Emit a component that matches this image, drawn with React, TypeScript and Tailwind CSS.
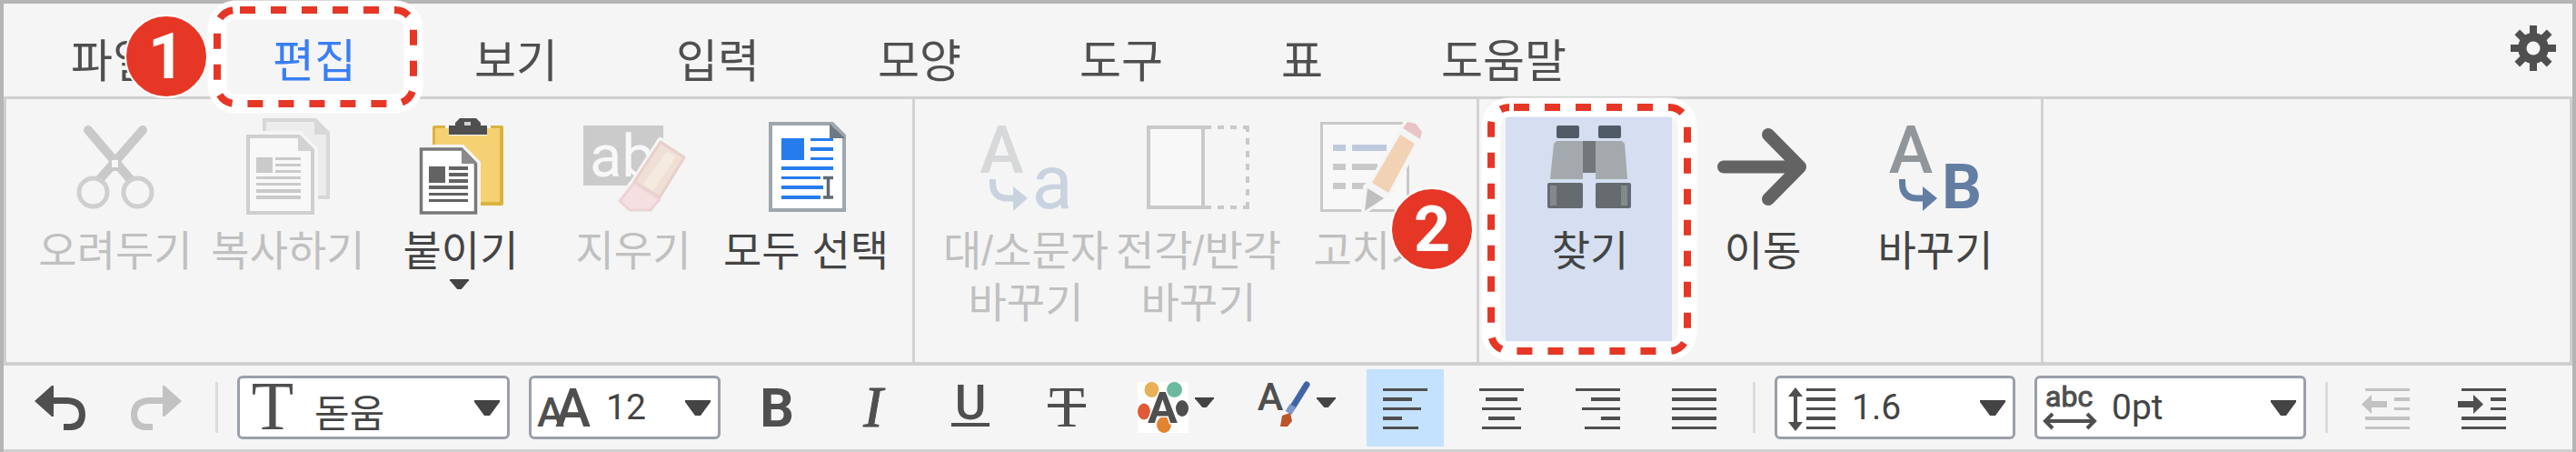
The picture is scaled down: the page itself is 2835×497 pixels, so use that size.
import { useState } from "react";
import type { ReactNode } from "react";

const TABS = ["파일", "편집", "보기", "입력", "모양", "도구", "표", "도움말"];

/* ---------- callouts ---------- */

function Ring({ width, height, className }: { width: number; height: number; className: string }) {
  const shape = { x: 10, y: 11, width: width - 20, height: height - 21, rx: 20, fill: "none" };
  return (
    <svg
      width={width}
      height={height}
      className={`pointer-events-none absolute z-10 max-w-none overflow-visible ${className}`}
      aria-hidden="true"
    >
      <rect {...shape} stroke="#ffffff" strokeWidth="21" />
      <rect {...shape} stroke="#e63726" strokeWidth="8" strokeDasharray="17 17" strokeDashoffset="-5" />
    </svg>
  );
}

function Badge({ children, className }: { children: ReactNode; className: string }) {
  return (
    <span
      className={`pointer-events-none absolute z-20 flex size-[92px] items-center justify-center rounded-full border-2 border-white bg-[#e63726] font-['Roboto',sans-serif] text-[70px] leading-none font-bold text-white ${className}`}
    >
      {children}
    </span>
  );
}

/* ---------- ribbon icons (111 x 112) ---------- */

function RibbonSvg({ children }: { children: ReactNode }) {
  return (
    <svg width="111" height="112" viewBox="0 0 111 112" className="overflow-visible" aria-hidden="true">
      {children}
    </svg>
  );
}

const roboto = "Roboto, sans-serif";

function CutIcon() {
  return (
    <RibbonSvg>
      <g fill="none" stroke="#c9c9c9">
        <path d="M27 15 L74 70 M87 15 L39 70" strokeWidth="10" strokeLinecap="round" />
        <circle cx="32.5" cy="83.5" r="15.5" stroke="#cfcfcf" strokeWidth="5" fill="#f5f5f5" />
        <circle cx="81.5" cy="83.5" r="15.5" stroke="#cfcfcf" strokeWidth="5" fill="#f5f5f5" />
      </g>
      <rect x="50" y="43" width="14" height="17" fill="#c9c9c9" />
      <rect x="53" y="48" width="7" height="8" fill="#f8f8f8" />
    </RibbonSvg>
  );
}

function CopyIcon() {
  return (
    <RibbonSvg>
      <path d="M31 4 H87 L101 18 V89 H31 Z" fill="#ececec" stroke="#d7d7d7" strokeWidth="4" />
      <path d="M86 2 V20 H103 Z" fill="#d7d7d7" />
      <path d="M7 16 H71 L90 35 V112 H7 Z" fill="#f5f5f5" />
      <path d="M13 22 H69 L84 37 V106 H13 Z" fill="#f8f8f8" stroke="#cfcfcf" strokeWidth="4" />
      <path d="M68 20 V38 H86 Z" fill="#d3d3d3" />
      <g fill="#cacaca">
        <rect x="22" y="45" width="18" height="17" />
        <rect x="43" y="45" width="28" height="3" />
        <rect x="43" y="52" width="28" height="3" />
        <rect x="43" y="59" width="28" height="3" />
        <rect x="22" y="66" width="49" height="3" />
        <rect x="22" y="73" width="49" height="3" />
        <rect x="22" y="80" width="49" height="4" />
        <rect x="22" y="87" width="49" height="4" />
      </g>
    </RibbonSvg>
  );
}

function PasteIcon() {
  return (
    <RibbonSvg>
      <rect x="26" y="10" width="78" height="88" rx="2" fill="#dbb33d" />
      <rect x="29" y="13" width="71" height="81" fill="#f5d173" />
      <path d="M40 10 H90 V13 H86 V21 H44 V13 H40 Z" fill="#f5f5f5" />
      <rect x="44" y="10" width="42" height="10" fill="#4f4f4f" />
      <path d="M51 11 V7 L56 2 H74 L79 7 V11 Z" fill="#4f4f4f" />
      <rect x="61" y="6" width="7" height="4" fill="#d0d0d0" />
      <path d="M8 31 H60 L79 50 V112 H8 Z" fill="#f5f5f5" />
      <path d="M13.5 36 H58 L73.5 52 V106 H13.5 Z" fill="#ffffff" stroke="#787878" strokeWidth="3.5" />
      <path d="M58 34 V52 H75 Z" fill="#8b8b8b" />
      <g fill="#636363">
        <rect x="22" y="55" width="18" height="18" />
        <rect x="44" y="55" width="21" height="4" />
        <rect x="44" y="62" width="21" height="4" />
        <rect x="44" y="69" width="21" height="4" />
        <rect x="22" y="76" width="43" height="4" />
        <rect x="22" y="84" width="43" height="3" />
        <rect x="22" y="91" width="43" height="3" />
      </g>
    </RibbonSvg>
  );
}

function EraseIcon() {
  return (
    <RibbonSvg>
      <rect x="2" y="10" width="88" height="66" fill="#cbcbcb" />
      <text x="9" y="66" fontFamily={roboto} fontSize="65" fill="#f8f8f8">
        ab
      </text>
      <path
        d="M87 27 L113 44 L114 50 L87 90 L76 104 H52 L41 93 L58 72 Z"
        fill="#f5f5f5"
        stroke="#f5f5f5"
        strokeWidth="8"
        strokeLinejoin="round"
      />
      <path d="M87 28 L113 45 L86 89 L58 72 Z" fill="#f0dfd5" stroke="#e7cfca" strokeWidth="3" strokeLinejoin="round" />
      <path d="M94 38 L104 44 L79 82 L67 75 Z" fill="#f4eadd" />
      <path d="M58 73 L86 91 L76 103 H53 L42 93 Z" fill="#f5dfe1" stroke="#edd3d5" strokeWidth="3" strokeLinejoin="round" />
    </RibbonSvg>
  );
}

function SelectAllIcon() {
  return (
    <RibbonSvg>
      <path d="M18 8 H86 L99 21 V103 H18 Z" fill="#ffffff" stroke="#9ea7af" strokeWidth="4" />
      <path d="M83 8 V24 H100 Z" fill="#6f7983" />
      <g fill="#267ced">
        <rect x="30" y="24" width="25" height="24" />
        <rect x="62" y="24" width="25" height="3" />
        <rect x="62" y="34" width="25" height="4" />
        <rect x="62" y="45" width="25" height="3" />
        <rect x="30" y="55" width="57" height="4" />
        <rect x="30" y="66" width="43" height="3" />
        <rect x="30" y="76" width="46" height="4" />
        <rect x="30" y="87" width="43" height="4" />
      </g>
      <path d="M76 67.5 H87 M76 89 H87 M81.5 67 V89" stroke="#5f6973" strokeWidth="3.5" fill="none" />
    </RibbonSvg>
  );
}

function SwapArrow({ color }: { color: string }) {
  return (
    <>
      <path d="M20.5 69 V73 Q20.5 90 37 90 H44" fill="none" stroke={color} strokeWidth="7" />
      <path d="M43 77 L59 90 L43 104 Z" fill={color} />
    </>
  );
}

function CaseIcon() {
  return (
    <RibbonSvg>
      <text x="30.5" y="62" textAnchor="middle" fontFamily={roboto} fontSize="73" fontWeight="500" fill="#d6d8d9">
        A
      </text>
      <SwapArrow color="#c9d3df" />
      <text x="86" y="101" textAnchor="middle" fontFamily={roboto} fontSize="83" fill="#c9d3df">
        a
      </text>
    </RibbonSvg>
  );
}

function WidthIcon() {
  return (
    <RibbonSvg>
      <rect x="2" y="12" width="60" height="88" fill="#f8f8f8" stroke="#c9c9c9" strokeWidth="4" />
      <g fill="none" stroke="#c9c9c9" strokeWidth="4">
        <path d="M64 12 H113" strokeDasharray="7 7" />
        <path d="M64 100 H113" strokeDasharray="7 7" />
        <path d="M111 10 V102" strokeDasharray="7 7" />
      </g>
    </RibbonSvg>
  );
}

function FixIcon() {
  return (
    <RibbonSvg>
      <rect x="2.5" y="7.5" width="95" height="96" fill="#f8f8f8" stroke="#c9c9c9" strokeWidth="3" />
      <rect x="15" y="31" width="14" height="7" fill="#bfc9de" />
      <rect x="36" y="31" width="38" height="7" fill="#bfc9de" />
      <g fill="#c9c9c9">
        <rect x="15" y="52" width="14" height="7" />
        <rect x="36" y="52" width="28" height="7" />
        <rect x="15" y="73" width="14" height="7" />
        <rect x="36" y="73" width="16" height="7" />
      </g>
      <path
        d="M97 6 L106 8 L113 17 L111 24 L76 84 L50 103 L52 78 L58 73 L89 20 Z"
        fill="#f5f5f5"
        stroke="#f5f5f5"
        strokeWidth="8"
        strokeLinejoin="round"
      />
      <path d="M92 13 L97 6 L106 8 L113 17 L111 25 Z" fill="#e9c3c5" />
      <path d="M89 20 L105 30 L76 84 L58 73 Z" fill="#f1d2b4" />
      <path d="M53 79 L71 90 L50 104 Z" fill="#bfbfbf" />
    </RibbonSvg>
  );
}

function FindIcon() {
  return (
    <RibbonSvg>
      <rect x="20" y="10" width="25" height="14" rx="2" fill="#4f5b66" />
      <rect x="66" y="10" width="25" height="14" rx="2" fill="#4f5b66" />
      <rect x="49" y="27" width="14" height="35" fill="#72777b" />
      <path d="M20 27 H49 V69 H13 L17 30 Z" fill="#a4a9ad" />
      <path d="M63 27 H92 L95 30 L98 69 H63 Z" fill="#a4a9ad" />
      <rect x="10" y="73" width="39" height="28" rx="2" fill="#666b70" />
      <rect x="63" y="73" width="39" height="28" rx="2" fill="#666b70" />
      <rect x="13" y="76" width="7" height="22" fill="#84898c" />
      <rect x="91" y="76" width="7" height="22" fill="#84898c" />
    </RibbonSvg>
  );
}

function GoToIcon() {
  return (
    <RibbonSvg>
      <path
        d="M14 55.5 H97 M63 20 L98 55.5 L63 91"
        fill="none"
        stroke="#636363"
        strokeWidth="14"
        strokeLinecap="round"
        strokeLinejoin="round"
      />
    </RibbonSvg>
  );
}

function ReplaceIcon() {
  return (
    <RibbonSvg>
      <text x="30" y="62" textAnchor="middle" fontFamily={roboto} fontSize="73" fontWeight="500" fill="#91969a">
        A
      </text>
      <SwapArrow color="#637da3" />
      <text x="86" y="101" textAnchor="middle" fontFamily={roboto} fontSize="69" fontWeight="700" fill="#637da3">
        B
      </text>
    </RibbonSvg>
  );
}

/* ---------- ribbon ---------- */

function RibbonButton({
  label,
  icon,
  disabled,
  active,
  menu,
  children,
}: {
  label: ReactNode;
  icon: ReactNode;
  disabled?: boolean;
  active?: boolean;
  menu?: boolean;
  children?: ReactNode;
}) {
  return (
    <div className="relative flex">
      <button
        type="button"
        disabled={disabled}
        className={`flex min-h-[247px] w-[183px] flex-col items-center text-[46px] leading-[57px] whitespace-nowrap ${
          active ? "bg-[#d5dff1]" : ""
        } ${disabled ? "text-[#c0c0c0]" : "text-[#444444]"}`}
      >
        {icon}
        <span className="mt-2 pl-[3px]">{label}</span>
        {menu && <Caret className="mt-[2px] h-[11px] w-[21px]" />}
      </button>
      {children}
    </div>
  );
}

function RibbonGroup({ first, children }: { first?: boolean; children: ReactNode }) {
  return (
    <div
      className={`flex gap-[7px] border-r-[3px] border-[#d2d2d2] pt-[19px] pb-[23px] ${
        first ? "px-[27px]" : "pr-[26px] pl-[29px]"
      }`}
    >
      {children}
    </div>
  );
}

/* ---------- format bar ---------- */

function Caret({ className }: { className: string }) {
  return (
    <svg viewBox="0 0 28 17" preserveAspectRatio="none" className={`shrink-0 ${className}`} aria-hidden="true">
      <path d="M0 0 H28 V2 L17 17 H11 L0 2 Z" fill="#444444" />
    </svg>
  );
}

function Divider({ className }: { className: string }) {
  return <span className={`h-14 w-[3px] bg-[#dcdcdc] ${className}`} />;
}

function ToolButton({
  label,
  wide,
  active,
  disabled,
  onClick,
  children,
}: {
  label: string;
  wide?: boolean;
  active?: boolean;
  disabled?: boolean;
  onClick?: () => void;
  children: ReactNode;
}) {
  return (
    <button
      type="button"
      aria-label={label}
      disabled={disabled}
      onClick={onClick}
      className={`flex h-[92px] items-center justify-center ${wide ? "w-[133px]" : "w-[106px]"}`}
    >
      <span
        className={`flex h-[85px] items-center justify-center ${wide ? "gap-[7px]" : "w-[85px]"} ${
          active ? "bg-[#c4e2fd]" : ""
        }`}
      >
        {children}
      </span>
    </button>
  );
}

function Picker({
  id,
  label,
  options,
  icon,
  className,
  textClass = "text-[39px]",
}: {
  id: string;
  label: string;
  options: string[];
  icon: ReactNode;
  className: string;
  textClass?: string;
}) {
  return (
    <div
      className={`relative flex h-[70px] items-center rounded-md border-[3px] border-[#9b9faa] bg-white ${className}`}
    >
      <label htmlFor={id} aria-label={label}>
        <svg width="80" height="64" viewBox="0 0 80 64" className="overflow-visible" aria-hidden="true">
          {icon}
        </svg>
      </label>
      <select
        id={id}
        className={`h-full min-w-0 flex-1 appearance-none bg-transparent pl-[2px] font-['Roboto','Noto_Sans_CJK_KR',sans-serif] text-[#444444] outline-none ${textClass}`}
      >
        {options.map((o) => (
          <option key={o}>{o}</option>
        ))}
      </select>
      <Caret className="pointer-events-none mr-2 h-[17px] w-[28px]" />
    </div>
  );
}

function GlyphSvg({ width = 56, children }: { width?: number; children: ReactNode }) {
  return (
    <svg width={width} height="56" viewBox={`0 0 ${width} 56`} className="overflow-visible" aria-hidden="true">
      {children}
    </svg>
  );
}

function Bars({ rows, color = "#4f4f4f" }: { rows: [number, number][]; color?: string }) {
  return (
    <>
      {rows.map(([x, w], i) => (
        <rect key={i} x={x} y={[7, 17, 28, 38, 49][i]} width={w} height={[3, 4, 3, 4, 3][i]} fill={color} />
      ))}
    </>
  );
}

function UndoArrow() {
  return (
    <>
      <path d="M0 21 L19 4 H21 V38 H19 Z" fill="currentColor" />
      <path d="M20 20.5 H36 Q52 21 52.5 36 Q52 49 40 49.5 H32" fill="none" stroke="currentColor" strokeWidth="7" />
    </>
  );
}

const ALIGNMENTS: { label: string; rows: [number, number][] }[] = [
  { label: "왼쪽 정렬", rows: [[0, 49], [0, 32], [0, 42], [0, 21], [0, 39]] },
  { label: "가운데 정렬", rows: [[0, 49], [7, 35], [3, 43], [10, 29], [3, 43]] },
  { label: "오른쪽 정렬", rows: [[0, 49], [17, 32], [7, 42], [28, 21], [10, 39]] },
  { label: "양쪽 정렬", rows: [[0, 49], [0, 49], [0, 49], [0, 49], [0, 49]] },
];

function FormatBar() {
  const [align, setAlign] = useState(0);
  return (
    <div className="flex flex-wrap items-center border-b-[3px] border-[#d0d0d0] pl-[9px]">
      <ToolButton label="되돌리기">
        <span className="text-[#4f4f4f]">
          <GlyphSvg>
            <UndoArrow />
          </GlyphSvg>
        </span>
      </ToolButton>
      <ToolButton label="다시 실행" disabled>
        <span className="-scale-x-100 text-[#c2c2c2]">
          <GlyphSvg>
            <UndoArrow />
          </GlyphSvg>
        </span>
      </ToolButton>
      <Divider className="mr-[21px] ml-3" />

      <Picker
        id="font-family"
        label="글꼴"
        options={["돋움", "굴림", "바탕"]}
        className="w-[300px]"
        textClass="pt-2 text-[42px]"
        icon={
          <text x="36" y="56" textAnchor="middle" fontFamily="'Liberation Serif', serif" fontSize="76" fill="#4f4f4f">
            T
          </text>
        }
      />
      <Picker
        id="font-size"
        label="글자 크기"
        options={["12", "14", "16"]}
        className="ml-[21px] w-[211px]"
        icon={
          <g fontFamily={roboto} fontWeight="500" fill="#4f4f4f">
            <text x="6" y="53" fontSize="45">
              A
            </text>
            <text x="26" y="53" fontSize="59">
              A
            </text>
          </g>
        }
      />

      <div className="ml-[10px] flex">
        <ToolButton label="진하게">
          <GlyphSvg>
            <text x="27" y="49" textAnchor="middle" fontFamily={roboto} fontSize="59" fontWeight="700" fill="#4f4f4f">
              B
            </text>
          </GlyphSvg>
        </ToolButton>
        <ToolButton label="기울임">
          <GlyphSvg>
            <text
              x="27"
              y="49"
              textAnchor="middle"
              fontFamily="'Liberation Serif', serif"
              fontStyle="italic"
              fontSize="64"
              fill="#4f4f4f"
              stroke="#4f4f4f"
              strokeWidth="1"
            >
              I
            </text>
          </GlyphSvg>
        </ToolButton>
        <ToolButton label="밑줄">
          <GlyphSvg>
            <text x="28" y="41" textAnchor="middle" fontFamily={roboto} fontSize="53" fontWeight="500" fill="#4f4f4f">
              U
            </text>
            <rect x="7" y="45" width="42" height="4" fill="#4f4f4f" />
          </GlyphSvg>
        </ToolButton>
        <ToolButton label="취소선">
          <GlyphSvg>
            <text x="28" y="49" textAnchor="middle" fontFamily="'Liberation Serif', serif" fontSize="64" fill="#4f4f4f">
              T
            </text>
            <rect x="7" y="24" width="42" height="4" fill="#4f4f4f" />
          </GlyphSvg>
        </ToolButton>
        <ToolButton label="글자 색" wide>
          <GlyphSvg>
            <rect width="56" height="56" fill="#ffffff" />
            <ellipse cx="15.5" cy="8.5" rx="8" ry="8.5" fill="#eab056" />
            <ellipse cx="40.5" cy="8.5" rx="8.5" ry="8.5" fill="#6db9a0" />
            <ellipse cx="7" cy="32.5" rx="7" ry="9" fill="#e15a38" />
            <ellipse cx="49" cy="29" rx="7" ry="9" fill="#4f4f4f" />
            <ellipse cx="29" cy="47" rx="8" ry="9" fill="#e28330" />
            <text
              x="27.5"
              y="45"
              textAnchor="middle"
              fontFamily={roboto}
              fontSize="49"
              fontWeight="700"
              fill="#4f4f4f"
              stroke="#ffffff"
              strokeWidth="3"
              paintOrder="stroke"
            >
              A
            </text>
          </GlyphSvg>
          <Caret className="-mt-3 h-[11px] w-[21px]" />
        </ToolButton>
        <ToolButton label="서식 복사" wide>
          <GlyphSvg width={58}>
            <text x="14" y="31" textAnchor="middle" fontFamily={roboto} fontSize="43" fontWeight="500" fill="#4f4f4f">
              A
            </text>
            <path d="M54 3 L39 27" stroke="#4365a8" strokeWidth="7" strokeLinecap="round" />
            <path d="M39 26 L34 34" stroke="#7b97cc" strokeWidth="8" />
            <path d="M27 37 L36 34 L38 43 L33 49 H25 Z" fill="#bb552c" />
          </GlyphSvg>
          <Caret className="-mt-3 h-[11px] w-[21px]" />
        </ToolButton>
        {ALIGNMENTS.map((a, i) => (
          <ToolButton key={a.label} label={a.label} active={align === i} onClick={() => setAlign(i)}>
            <GlyphSvg width={49}>
              <Bars rows={a.rows} />
            </GlyphSvg>
          </ToolButton>
        ))}
      </div>
      <Divider className="mr-[21px] ml-3" />

      <Picker
        id="line-height"
        label="줄 간격"
        options={["1.6", "1.8", "2.0"]}
        className="w-[265px]"
        icon={
          <g fill="#4f4f4f">
            <path d="M20 13 V55" stroke="#4f4f4f" strokeWidth="4" />
            <path d="M20 10 L28 20 H12 Z M20 58 L28 48 H12 Z" />
            <rect x="32" y="11" width="32" height="3" />
            <rect x="32" y="21" width="32" height="4" />
            <rect x="32" y="32" width="32" height="3" />
            <rect x="32" y="42" width="32" height="4" />
            <rect x="32" y="53" width="32" height="3" />
          </g>
        }
      />
      <Picker
        id="letter-gap"
        label="자간"
        options={["0pt", "1pt", "2pt"]}
        className="ml-[21px] w-[299px]"
        icon={
          <>
            <text x="9" y="31" fontFamily={roboto} fontSize="32" fill="#4f4f4f" stroke="#4f4f4f">
              abc
            </text>
            <path
              d="M10 47 H62 M17 39 L9 47 L17 55 M55 39 L63 47 L55 55"
              fill="none"
              stroke="#4f4f4f"
              strokeWidth="4"
            />
          </>
        }
      />
      <Divider className="mr-[10px] ml-[21px]" />

      <ToolButton label="내어쓰기" disabled>
        <GlyphSvg width={53}>
          <Bars color="#c2c2c2" rows={[[4, 49], [36, 17], [36, 17], [4, 49], [4, 49]]} />
          <path d="M0 24.5 L11 14 V21 H28 V28 H11 V35 Z" fill="#c2c2c2" />
        </GlyphSvg>
      </ToolButton>
      <ToolButton label="들여쓰기">
        <GlyphSvg width={53}>
          <Bars rows={[[4, 49], [36, 17], [36, 17], [4, 49], [4, 49]]} />
          <path d="M28 24.5 L17 14 V21 H0 V28 H17 V35 Z" fill="#4f4f4f" />
        </GlyphSvg>
      </ToolButton>
    </div>
  );
}

/* ---------- page ---------- */

function GearIcon() {
  return (
    <svg width="50" height="50" viewBox="-25 -25 50 50" aria-hidden="true">
      <g fill="#4f4f4f">
        {[0, 45, 90, 135].map((r) => (
          <rect key={r} x="-4" y="-25" width="8" height="50" transform={`rotate(${r})`} />
        ))}
        <circle r="17" />
      </g>
      <circle r="7.5" fill="#f5f5f5" />
    </svg>
  );
}

export default function App() {
  return (
    <div className="border-4 border-b-0 border-[#b5b5b5] bg-[#f5f5f5] font-['Liberation_Sans','Noto_Sans_CJK_KR',sans-serif]">
      <header className="flex items-start justify-between">
        <nav className="flex flex-wrap pl-[9px]">
          {TABS.map((tab) => (
            <div key={tab} className="relative">
              <a
                href="#"
                className={`block px-[65px] pt-9 pb-[10px] text-[50px] leading-[56px] whitespace-nowrap ${
                  tab === "편집" ? "text-[#3a7ef5]" : "text-[#4f4f4f]"
                }`}
              >
                {tab}
              </a>
              {tab === "편집" && (
                <>
                  <Ring width={236} height={124} className="-top-1 -left-[6px]" />
                  <Badge className="top-[12px] -left-[98px]">1</Badge>
                </>
              )}
            </div>
          ))}
        </nav>
        <button type="button" aria-label="설정" className="mt-6 mr-[18px]">
          <GearIcon />
        </button>
      </header>

      <div className="flex flex-wrap border-[3px] border-b-4 border-[#d0d0d0]">
        <RibbonGroup first>
          <RibbonButton label="오려두기" icon={<CutIcon />} disabled />
          <RibbonButton label="복사하기" icon={<CopyIcon />} disabled />
          <RibbonButton label="붙이기" icon={<PasteIcon />} menu />
          <RibbonButton label="지우기" icon={<EraseIcon />} disabled />
          <RibbonButton label="모두 선택" icon={<SelectAllIcon />} />
        </RibbonGroup>
        <RibbonGroup>
          <RibbonButton
            label={
              <>
                대/소문자
                <br />
                바꾸기
              </>
            }
            icon={<CaseIcon />}
            disabled
          />
          <RibbonButton
            label={
              <>
                전각/반각
                <br />
                바꾸기
              </>
            }
            icon={<WidthIcon />}
            disabled
          />
          <RibbonButton label="고치기" icon={<FixIcon />} disabled />
        </RibbonGroup>
        <RibbonGroup>
          <RibbonButton label="찾기" icon={<FindIcon />} active>
            <Ring width={236} height={289} className="-top-[21px] -left-[26px]" />
            <Badge className="top-[78px] -left-[127px]">2</Badge>
          </RibbonButton>
          <RibbonButton label="이동" icon={<GoToIcon />} />
          <RibbonButton label="바꾸기" icon={<ReplaceIcon />} />
        </RibbonGroup>
      </div>

      <FormatBar />
    </div>
  );
}
